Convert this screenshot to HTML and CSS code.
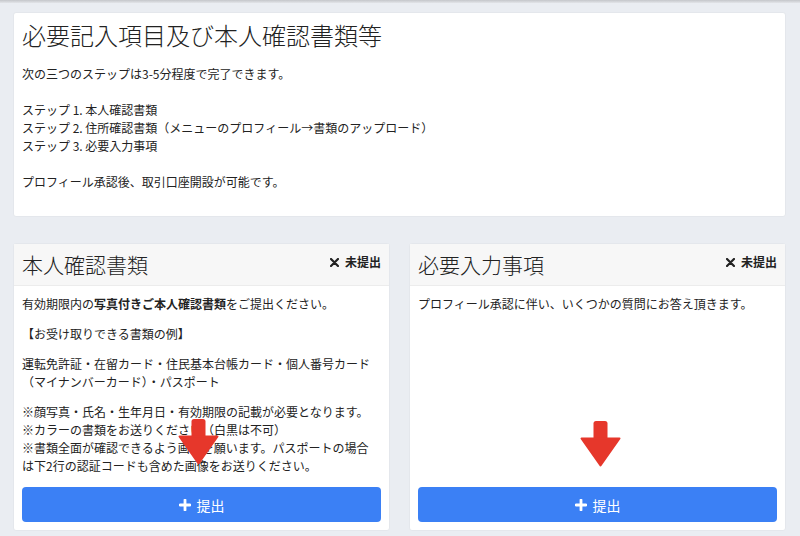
FILE: index.html
```html
<!DOCTYPE html>
<html lang="ja">
<head>
    <meta charset="UTF-8">
    <title>必要記入項目及び本人確認書類等</title>
    <link rel="stylesheet" href="styles.css">
</head>
<body>
<div class="topbar"></div>

<div class="page">
    <div class="intro">
        <h1>必要記入項目及び本人確認書類等</h1>
        <p>
            次の三つのステップは3-5分程度で完了できます。<br>
            <br>
            ステップ 1. 本人確認書類<br>
            ステップ 2. 住所確認書類（メニューのプロフィール→書類のアップロード）<br>
            ステップ 3. 必要入力事項<br>
            <br>
            プロフィール承認後、取引口座開設が可能です。
        </p>
    </div>

    <div class="cards">
        <div class="card">
            <div class="card-head">
                <h2>本人確認書類</h2>
                <span class="status">
                    <svg width="9" height="9" viewBox="0 0 9 9"><path d="M1 1L8 8M8 1L1 8" stroke="#222" stroke-width="2.2" stroke-linecap="round"/></svg>
                    未提出
                </span>
            </div>
            <div class="card-body">
                <p>有効期限内の<b>写真付きご本人確認書類</b>をご提出ください。</p>
                <p>【お受け取りできる書類の例】</p>
                <p>運転免許証・在留カード・住民基本台帳カード・個人番号カード（マイナンバーカード）・パスポート</p>
                <p>
                    ※顔写真・氏名・生年月日・有効期限の記載が必要となります。<br>
                    ※カラーの書類をお送りください（白黒は不可）<br>
                    ※書類全面が確認できるよう画像を願います。パスポートの場合は下2行の認証コードも含めた画像をお送りください。
                </p>
                <a class="btn" href="javascript:;">
                    <svg width="12" height="12" viewBox="0 0 12 12"><path d="M6 1V11M1 6H11" stroke="#fff" stroke-width="2.8" stroke-linecap="round"/></svg>
                    提出
                </a>
            </div>
            <!-- 注目用の矢印 -->
            <svg class="arrow arrow-left" width="41" height="46" viewBox="0 0 41 46">
                <rect x="13.5" y="0" width="14" height="20" rx="2.5" fill="#e6372b"/>
                <path d="M1.5 17.5H39.5L20.5 44.5Z" fill="#e6372b" stroke="#e6372b" stroke-width="2" stroke-linejoin="round"/>
            </svg>
        </div>

        <div class="card">
            <div class="card-head">
                <h2>必要入力事項</h2>
                <span class="status">
                    <svg width="9" height="9" viewBox="0 0 9 9"><path d="M1 1L8 8M8 1L1 8" stroke="#222" stroke-width="2.2" stroke-linecap="round"/></svg>
                    未提出
                </span>
            </div>
            <div class="card-body">
                <p>プロフィール承認に伴い、いくつかの質問にお答え頂きます。</p>
                <a class="btn" href="javascript:;">
                    <svg width="12" height="12" viewBox="0 0 12 12"><path d="M6 1V11M1 6H11" stroke="#fff" stroke-width="2.8" stroke-linecap="round"/></svg>
                    提出
                </a>
            </div>
            <svg class="arrow arrow-right" width="41" height="46" viewBox="0 0 41 46">
                <rect x="13.5" y="0" width="14" height="20" rx="2.5" fill="#e6372b"/>
                <path d="M1.5 17.5H39.5L20.5 44.5Z" fill="#e6372b" stroke="#e6372b" stroke-width="2" stroke-linejoin="round"/>
            </svg>
        </div>
    </div>
</div>
</body>
</html>
```

FILE: styles.css
```css
*{
    margin: 0;
    padding: 0;
    box-sizing: border-box;
}

body{
    background-color: #eaedf2;
    font-family: "Noto Sans CJK JP", "Noto Sans", sans-serif;
    font-size: 12px;
    color: #222;
}

.topbar{
    height: 3px;
    background: linear-gradient(#c4c6ca, #e3e5e9);
}

.page{
    padding: 9px 14px 0 13px;
}

/* 上のカード */
.intro{
    background-color: #fff;
    border: 1px solid #e4e7ec;
    border-radius: 3px;
    padding: 7px 8px 25px;
    margin-bottom: 26px;
}

.intro h1{
    font-size: 24px;
    font-weight: 300;
    line-height: 29px;
    margin-bottom: 16px;
}

.intro p{
    line-height: 18px;
}

/* 下の二つのカード */
.cards{
    display: grid;
    grid-template-columns: 1fr 1fr;
    gap: 19px;
}

.card{
    position: relative;
    display: flex;
    flex-direction: column;
    background-color: #fff;
    border: 1px solid #e4e7ec;
    border-radius: 3px;
}

.card-head{
    display: flex;
    justify-content: space-between;
    align-items: flex-start;
    background-color: #f7f7f7;
    border-bottom: 1px solid #ececec;
    padding: 8px 8px;
}

.card-head h2{
    font-size: 21px;
    font-weight: 300;
    line-height: 25px;
}

.status{
    display: flex;
    align-items: center;
    gap: 6px;
    margin-top: 2px;
    font-size: 12px;
    font-weight: bold;
    line-height: 16px;
    color: #222;
}

.card-body{
    flex: 1;
    display: flex;
    flex-direction: column;
    padding: 9px 8px 8px;
}

.card-body p{
    line-height: 18px;
    margin-bottom: 12px;
    padding-right: 4px;
}

.btn{
    margin-top: auto;
    height: 35px;
    display: flex;
    justify-content: center;
    align-items: center;
    gap: 6px;
    background-color: #3b80f5;
    border-radius: 4px;
    color: #fff;
    font-size: 14px;
    text-decoration: none;
}

.arrow{
    position: absolute;
}

.arrow-left{
    left: 164px;
    top: 175px;
}

.arrow-right{
    left: 170px;
    top: 177px;
}
```
